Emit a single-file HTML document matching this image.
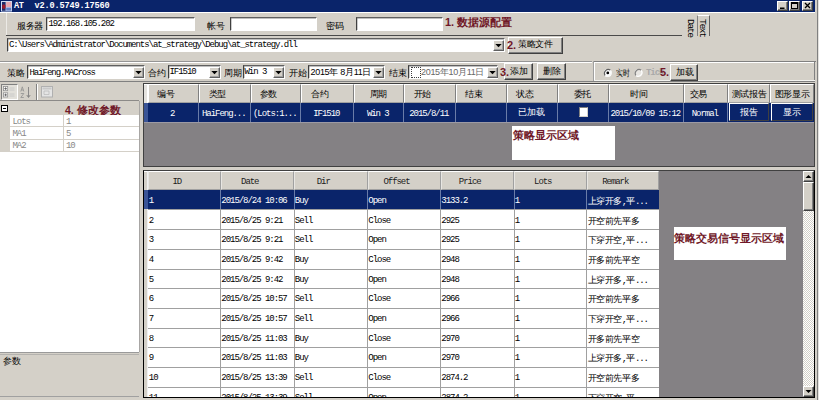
<!DOCTYPE html><html><head><meta charset="utf-8"><style>
html,body{margin:0;padding:0;width:819px;height:400px;overflow:hidden;background:#d4d0c8;position:relative}
div,svg{position:absolute;box-sizing:border-box}
svg{overflow:visible}
.t{white-space:nowrap;line-height:1}
.cn{font-family:"Liberation Sans",sans-serif;font-size:9px;letter-spacing:-0.4px;color:#000;font-weight:500}
.cm{font-weight:500}
.sn{font-family:"Liberation Sans",sans-serif;font-size:9px;color:#000}
.mn{font-family:"Liberation Mono",monospace;font-size:9px;letter-spacing:-1.04px;color:#000}
.rd{font-family:"Liberation Sans",sans-serif;font-size:11px;font-weight:bold;color:#701828}
.sk{border-top:1px solid #606060;border-left:1px solid #404040;border-bottom:1px solid #fff;border-right:1px solid #fff;box-shadow:inset 0.4px 0.4px 0 #808080}
.rs{background:#d4d0c8;border-top:1px solid #fff;border-left:1px solid #fff;border-bottom:1px solid #404040;border-right:1px solid #404040;box-shadow:inset -1px -1px 0 #808080}
</style></head><body>

<div style="left:0px;top:0px;width:815px;height:12px;background:#0a246a"></div>
<svg style="left:1px;top:1px" width="11" height="10.5"><rect x="0" y="0" width="11" height="10.5" fill="#d0daf0"/><rect x="1" y="1" width="3.6" height="8.8" fill="#1c2c6c"/><rect x="1.2" y="3.5" width="3.2" height="4.2" rx="1" fill="#a01828"/><rect x="5.2" y="1" width="5" height="5" fill="#e8a8b0"/><rect x="5.2" y="6.6" width="5" height="3" fill="#6080c8"/></svg>
<div class="t mn" style="left:14px;top:2.40px;color:#fff;font-weight:bold;font-size:8.6px;letter-spacing:-0.4px">AT</div>
<div class="t mn" style="left:34.5px;top:2.40px;color:#fff;font-weight:bold;font-size:8.6px;letter-spacing:-0.16px">v2.0.5749.17560</div>
<div class="rs" style="left:777px;top:1px;width:11px;height:10px;"></div>
<div class="rs" style="left:789px;top:1px;width:11px;height:10px;"></div>
<div class="rs" style="left:802px;top:1px;width:11px;height:10px;"></div>
<svg style="left:777px;top:1px" width="11" height="10"><rect x="3" y="6.5" width="4.5" height="1.5" fill="#000"/></svg>
<svg style="left:789px;top:1px" width="11" height="10"><rect x="2.5" y="1.5" width="6" height="6" fill="none" stroke="#000" stroke-width="1"/><rect x="2.5" y="1.5" width="6" height="1.5" fill="#000"/></svg>
<svg style="left:802px;top:1px" width="11" height="10"><path d="M3 2L8 7M8 2L3 7" stroke="#000" stroke-width="1.3"/></svg>
<div style="left:815px;top:0px;width:4px;height:400px;background:#d4d0c8"></div>
<div style="left:817.3px;top:0px;width:1px;height:400px;background:#808080"></div>
<div style="left:818.3px;top:0px;width:1px;height:400px;background:#e4e2de"></div>
<div style="left:0px;top:12px;width:815px;height:1px;background:#fff"></div>
<div class="t cn" style="left:17px;top:22.00px;">服务器</div>
<div class="sk" style="left:46px;top:17px;width:149px;height:14px;background:#fff"></div>
<div class="t mn" style="left:48.5px;top:20.30px;">192.168.105.202</div>
<div class="t cn" style="left:207px;top:21.50px;">帐号</div>
<div class="sk" style="left:230px;top:17px;width:87px;height:14px;background:#fff"></div>
<div class="t cn" style="left:326px;top:22.00px;">密码</div>
<div class="sk" style="left:356px;top:17px;width:87px;height:14px;background:#fff"></div>
<div class="t rd" style="left:445px;top:16.70px;">1. 数据源配置</div>
<div style="left:6px;top:34.8px;width:676px;height:1.4px;background:#4a4a4a"></div>
<div style="left:5.5px;top:13px;width:1px;height:22px;background:#eceae6"></div>
<div class="t mn" style="left:685.3px;top:19.00px;writing-mode:vertical-rl;font-size:9.6px;letter-spacing:-1.35px">Date</div>
<div style="left:697.3px;top:15px;width:13px;height:21px;border-left:1.3px solid #808080;border-right:1px solid #606060;border-top:1px solid #fff"></div>
<div class="t mn" style="left:697.3px;top:19.00px;writing-mode:vertical-rl;font-size:9.6px;letter-spacing:-1.35px">Text</div>
<div class="sk" style="left:7px;top:38px;width:498px;height:14px;background:#fff"></div>
<div class="t mn" style="left:9px;top:41.20px;">C:\Users\Administrator\Documents\at_strategy\Debug\at_strategy.dll</div>
<div class="rs" style="left:492.5px;top:39.5px;width:11px;height:11px;border-bottom-color:#606060;border-right-color:#606060;box-shadow:inset -1px -1px 0 #a0a0a0"></div>
<svg style="left:492.5px;top:39.5px" width="11" height="11"><path d="M2.30 3.90h6.4l-3.2 3.4z" fill="#000"/></svg>
<div class="rs" style="left:508px;top:37px;width:55px;height:17px;"></div>
<div class="t rd" style="left:507px;top:39.70px;">2.</div>
<div class="t cn" style="left:518px;top:40.00px;">策略文件</div>
<div style="left:0px;top:61px;width:592px;height:1px;background:#959595"></div>
<div style="left:0px;top:62px;width:592px;height:1px;background:#fff"></div>
<div class="t cn" style="left:7px;top:68.75px;">策略</div>
<div class="sk" style="left:27px;top:65px;width:118px;height:14px;background:#fff"></div>
<div class="t mn" style="left:29.5px;top:68.70px;">HaiFeng.MACross</div>
<div class="rs" style="left:133px;top:66.5px;width:11px;height:11px;border-bottom-color:#606060;border-right-color:#606060;box-shadow:inset -1px -1px 0 #a0a0a0"></div>
<svg style="left:133px;top:66.5px" width="11" height="11"><path d="M2.30 3.90h6.4l-3.2 3.4z" fill="#000"/></svg>
<div class="t cn" style="left:148px;top:68.75px;">合约</div>
<div class="sk" style="left:168px;top:65px;width:53px;height:14px;background:#fff"></div>
<div class="t mn" style="left:169.5px;top:67.70px;">IF1510</div>
<div class="rs" style="left:208.5px;top:66.5px;width:11px;height:11px;border-bottom-color:#606060;border-right-color:#606060;box-shadow:inset -1px -1px 0 #a0a0a0"></div>
<svg style="left:208.5px;top:66.5px" width="11" height="11"><path d="M2.30 3.90h6.4l-3.2 3.4z" fill="#000"/></svg>
<div class="t cn" style="left:224px;top:68.50px;">周期</div>
<div class="sk" style="left:243px;top:65px;width:42px;height:14px;background:#fff"></div>
<div class="t mn" style="left:244.5px;top:68.20px;">Win 3</div>
<div class="rs" style="left:273px;top:66.5px;width:11px;height:11px;border-bottom-color:#606060;border-right-color:#606060;box-shadow:inset -1px -1px 0 #a0a0a0"></div>
<svg style="left:273px;top:66.5px" width="11" height="11"><path d="M2.30 3.90h6.4l-3.2 3.4z" fill="#000"/></svg>
<div class="t cn" style="left:289px;top:68.50px;">开始</div>
<div class="sk" style="left:308px;top:65px;width:77px;height:14px;background:#fff"></div>
<div class="t cn" style="left:310.5px;top:67.50px;letter-spacing:-0.3px">2015年 8月11日</div>
<div class="rs" style="left:373px;top:66.5px;width:11px;height:11px;border-bottom-color:#606060;border-right-color:#606060;box-shadow:inset -1px -1px 0 #a0a0a0"></div>
<svg style="left:373px;top:66.5px" width="11" height="11"><path d="M2.30 3.90h6.4l-3.2 3.4z" fill="#000"/></svg>
<div class="t cn" style="left:389px;top:68.50px;">结束</div>
<div class="sk" style="left:408px;top:65px;width:90px;height:14px;background:#fff"></div>
<div style="left:410.5px;top:66.5px;width:10px;height:11px;border:1px dotted #404040;background:#fff"></div>
<div class="t cn" style="left:421px;top:67.50px;color:#686868;letter-spacing:-0.3px">2015年10月11日</div>
<div class="rs" style="left:486.5px;top:66.5px;width:11px;height:11px;border-bottom-color:#606060;border-right-color:#606060;box-shadow:inset -1px -1px 0 #a0a0a0"></div>
<svg style="left:486.5px;top:66.5px" width="11" height="11"><path d="M2.30 3.90h6.4l-3.2 3.4z" fill="#000"/></svg>
<div class="rs" style="left:504px;top:63px;width:29px;height:17px;"></div>
<div class="t rd" style="left:500px;top:66.70px;">3.</div>
<div class="t cn" style="left:510px;top:67.00px;">添加</div>
<div class="rs" style="left:537px;top:63px;width:29px;height:17px;"></div>
<div class="t cn" style="left:543px;top:67.00px;">删除</div>
<div style="left:592.5px;top:61px;width:1px;height:21px;background:#a0a0a0"></div>
<div style="left:593.5px;top:62px;width:1px;height:19px;background:#fff"></div>
<div style="left:593.5px;top:61px;width:222px;height:1px;background:#808080"></div>
<div style="left:594px;top:62px;width:221px;height:1px;background:#fff"></div>
<div style="left:814px;top:61px;width:1px;height:21px;background:#808080"></div>
<div style="left:593.5px;top:80.3px;width:221px;height:1px;background:#f4f4f0"></div>
<div style="left:0px;top:81.3px;width:815px;height:1px;background:#808080"></div>
<svg style="left:603px;top:68px" width="10" height="10"><circle cx="4.8" cy="4.9" r="3.9" fill="#fff"/><path d="M2.1 7.6A3.9 3.9 0 0 1 7.5 2.2" stroke="#606060" stroke-width="1.1" fill="none"/><path d="M7.5 2.2A3.9 3.9 0 0 1 2.1 7.6" stroke="#f8f8f8" stroke-width="1.1" fill="none"/><circle cx="4.8" cy="4.9" r="1.4" fill="#000"/></svg>
<div class="t cn" style="left:615.5px;top:69.20px;transform:scaleX(0.76);transform-origin:0 0">实时</div>
<svg style="left:634px;top:68px" width="10" height="10"><circle cx="4.6" cy="4.9" r="3.9" fill="#e8e6e2"/><path d="M1.9 7.6A3.9 3.9 0 0 1 7.3 2.2" stroke="#808080" stroke-width="1.1" fill="none"/><path d="M7.3 2.2A3.9 3.9 0 0 1 1.9 7.6" stroke="#fff" stroke-width="1.1" fill="none"/></svg>
<div class="t mn" style="left:646px;top:68.60px;color:#a8a8a8;font-weight:bold">Tick</div>
<div class="t rd" style="left:660px;top:66.70px;">5.</div>
<div class="rs" style="left:670px;top:64px;width:28px;height:17px;"></div>
<div class="t cn" style="left:676px;top:67.50px;">加载</div>
<div style="left:1px;top:84px;width:16.5px;height:15.5px;border:1px solid #808080;border-right-color:#fff;border-bottom-color:#fff;background:#e2e0da"></div>
<svg style="left:3px;top:86px" width="13" height="12"><rect x="0.5" y="0.5" width="4.2" height="4.2" fill="#fff" stroke="#909090" stroke-width="0.8"/><path d="M1.3 2.6h2.6M2.6 1.3v2.6" stroke="#505050" stroke-width="0.8"/><rect x="0.5" y="6.8" width="4.2" height="4.2" fill="#fff" stroke="#909090" stroke-width="0.8"/><path d="M1.3 8.9h2.6M2.6 7.6v2.6" stroke="#505050" stroke-width="0.8"/><path d="M6.5 2h5M6.5 4h5M6.5 8h5M6.5 10h5" stroke="#c4c4c4" stroke-width="0.8"/></svg>
<svg style="left:20px;top:85.5px" width="12" height="13"><path d="M0.8 5.5L2.3 0.8L3.8 5.5M1.3 4h2" stroke="#909090" stroke-width="0.8" fill="none"/><path d="M0.8 7.5h3L0.8 11.5h3" stroke="#909090" stroke-width="0.8" fill="none"/><path d="M8.5 1v10M6.8 9l1.7 2.5 1.7-2.5" stroke="#808080" stroke-width="0.9" fill="none"/></svg>
<div style="left:36.3px;top:84px;width:1px;height:16px;background:#808080"></div>
<div style="left:37.3px;top:84px;width:1px;height:16px;background:#fff"></div>
<svg style="left:41px;top:86px" width="12" height="11"><rect x="0.5" y="0.5" width="11" height="10.5" fill="#e4e4e4" stroke="#b0b0b0"/><rect x="1.5" y="1.5" width="9" height="2" fill="#c8c8c8"/><path d="M3 5h5v3.5H3z" fill="none" stroke="#b8b8b8" stroke-width="0.7"/></svg>
<div style="left:0px;top:100px;width:140px;height:1.2px;background:#8c8a88"></div>
<div style="left:0px;top:102.5px;width:139px;height:12.5px;background:#d4d0c8"></div>
<div style="left:1px;top:104.8px;width:7px;height:7px;border:1px solid #000;background:#fff"></div>
<div style="left:3px;top:107.7px;width:3.2px;height:1.3px;background:#000"></div>
<div class="t rd" style="left:65px;top:104.70px;font-size:10.5px">4. 修改参数</div>
<div style="left:10px;top:115.0px;width:129px;height:12.3px;background:#fff;border-bottom:1px solid #d4d0c8"></div>
<div class="t mn" style="left:12.5px;top:117.80px;color:#888">Lots</div>
<div class="t mn" style="left:66px;top:117.80px;color:#888">1</div>
<div style="left:10px;top:127.3px;width:129px;height:12.3px;background:#fff;border-bottom:1px solid #d4d0c8"></div>
<div class="t mn" style="left:12.5px;top:130.10px;color:#888">MA1</div>
<div class="t mn" style="left:66px;top:130.10px;color:#888">5</div>
<div style="left:10px;top:139.6px;width:129px;height:12.3px;background:#fff;border-bottom:1px solid #d4d0c8"></div>
<div class="t mn" style="left:12.5px;top:142.40px;color:#888">MA2</div>
<div class="t mn" style="left:66px;top:142.40px;color:#888">10</div>
<div style="left:63px;top:115px;width:1px;height:37px;background:#d4d0c8"></div>
<div style="left:0px;top:152px;width:139px;height:200px;background:#fff"></div>
<div style="left:0px;top:351.5px;width:140px;height:45.5px;border-top:1px solid #9a9a9a;border-bottom:1px solid #a0a0a0;border-right:1px solid #b0b0b0;background:#d4d0c8"></div>
<div style="left:0px;top:353.8px;width:139px;height:1px;background:#b4b2ae"></div>
<div class="t cn" style="left:3px;top:357.00px;">参数</div>
<div style="left:139px;top:83px;width:4px;height:317px;background:#d4d0c8"></div>
<div style="left:139px;top:101px;width:1.2px;height:251px;background:#a8a6a4"></div>
<div style="left:0px;top:397px;width:815px;height:3px;background:#d4d0c8"></div>
<div style="left:143px;top:83px;width:672px;height:84px;background:#848184;border-left:1px solid #404040;border-top:1px solid #404040;border-bottom:1px solid #404040;border-right:1px solid #404040"></div>
<div style="left:144px;top:84px;width:670px;height:18.5px;background:#d4d0c8"></div>
<div style="left:144px;top:84px;width:4px;height:18.8px;background:#e4e2de;border-right:1px solid #fff;border-top:1px solid #fff"></div>
<div style="left:144px;top:102.8px;width:4px;height:19px;background:#3a5496"></div>
<div style="left:148px;top:84px;width:51px;height:18.5px;border-top:1px solid #fff;border-left:1px solid #fff;border-right:1px solid #808080;border-bottom:1px solid #a0a0a0"></div>
<div class="t cn" style="left:148px;top:89.50px;width:36px;text-align:center;">编号</div>
<div style="left:199px;top:84px;width:52px;height:18.5px;border-top:1px solid #fff;border-left:1px solid #fff;border-right:1px solid #808080;border-bottom:1px solid #a0a0a0"></div>
<div class="t cn" style="left:199px;top:89.50px;width:37px;text-align:center;">类型</div>
<div style="left:251px;top:84px;width:50px;height:18.5px;border-top:1px solid #fff;border-left:1px solid #fff;border-right:1px solid #808080;border-bottom:1px solid #a0a0a0"></div>
<div class="t cn" style="left:251px;top:89.50px;width:35px;text-align:center;">参数</div>
<div style="left:301px;top:84px;width:53px;height:18.5px;border-top:1px solid #fff;border-left:1px solid #fff;border-right:1px solid #808080;border-bottom:1px solid #a0a0a0"></div>
<div class="t cn" style="left:301px;top:89.50px;width:38px;text-align:center;">合约</div>
<div style="left:354px;top:84px;width:50px;height:18.5px;border-top:1px solid #fff;border-left:1px solid #fff;border-right:1px solid #808080;border-bottom:1px solid #a0a0a0"></div>
<div class="t cn" style="left:354px;top:89.50px;width:49px;text-align:center;">周期</div>
<div style="left:404px;top:84px;width:52px;height:18.5px;border-top:1px solid #fff;border-left:1px solid #fff;border-right:1px solid #808080;border-bottom:1px solid #a0a0a0"></div>
<div class="t cn" style="left:404px;top:89.50px;width:37px;text-align:center;">开始</div>
<div style="left:456px;top:84px;width:51px;height:18.5px;border-top:1px solid #fff;border-left:1px solid #fff;border-right:1px solid #808080;border-bottom:1px solid #a0a0a0"></div>
<div class="t cn" style="left:456px;top:89.50px;width:36px;text-align:center;">结束</div>
<div style="left:507px;top:84px;width:51px;height:18.5px;border-top:1px solid #fff;border-left:1px solid #fff;border-right:1px solid #808080;border-bottom:1px solid #a0a0a0"></div>
<div class="t cn" style="left:507px;top:89.50px;width:36px;text-align:center;">状态</div>
<div style="left:558px;top:84px;width:51px;height:18.5px;border-top:1px solid #fff;border-left:1px solid #fff;border-right:1px solid #808080;border-bottom:1px solid #a0a0a0"></div>
<div class="t cn" style="left:558px;top:89.50px;width:48.5px;text-align:center;">委托</div>
<div style="left:609px;top:84px;width:75px;height:18.5px;border-top:1px solid #fff;border-left:1px solid #fff;border-right:1px solid #808080;border-bottom:1px solid #a0a0a0"></div>
<div class="t cn" style="left:609px;top:89.50px;width:60px;text-align:center;">时间</div>
<div style="left:684px;top:84px;width:44px;height:18.5px;border-top:1px solid #fff;border-left:1px solid #fff;border-right:1px solid #808080;border-bottom:1px solid #a0a0a0"></div>
<div class="t cn" style="left:684px;top:89.50px;width:29px;text-align:center;">交易</div>
<div style="left:728px;top:84px;width:42px;height:18.5px;border-top:1px solid #fff;border-left:1px solid #fff;border-right:1px solid #808080;border-bottom:1px solid #a0a0a0"></div>
<div class="t cn" style="left:728px;top:89.50px;width:42px;text-align:center;">测试报告</div>
<div style="left:770px;top:84px;width:44px;height:18.5px;border-top:1px solid #fff;border-left:1px solid #fff;border-right:1px solid #808080;border-bottom:1px solid #a0a0a0"></div>
<div class="t cn" style="left:770px;top:89.50px;width:44px;text-align:center;">图形显示</div>
<div style="left:148px;top:102.8px;width:666px;height:19px;background:#0a246a"></div>
<div style="left:144px;top:121.8px;width:670px;height:1.2px;background:#9c9aa4"></div>
<div style="left:198px;top:102.8px;width:1px;height:19px;background:#6a7ca8"></div>
<div class="t mn" style="left:146.8px;top:109.80px;width:51.0px;text-align:center;color:#fff">2</div>
<div style="left:250px;top:102.8px;width:1px;height:19px;background:#6a7ca8"></div>
<div class="t mn" style="left:197.8px;top:109.80px;width:52.0px;text-align:center;color:#fff">HaiFeng...</div>
<div style="left:300px;top:102.8px;width:1px;height:19px;background:#6a7ca8"></div>
<div class="t mn" style="left:249.8px;top:109.80px;width:50.0px;text-align:center;color:#fff">(Lots:1...</div>
<div style="left:353px;top:102.8px;width:1px;height:19px;background:#6a7ca8"></div>
<div class="t mn" style="left:299.8px;top:109.80px;width:53.0px;text-align:center;color:#fff">IF1510</div>
<div style="left:403px;top:102.8px;width:1px;height:19px;background:#6a7ca8"></div>
<div class="t mn" style="left:352.8px;top:109.80px;width:50.0px;text-align:center;color:#fff">Win 3</div>
<div style="left:455px;top:102.8px;width:1px;height:19px;background:#6a7ca8"></div>
<div class="t mn" style="left:402.8px;top:109.80px;width:52.0px;text-align:center;color:#fff">2015/8/11</div>
<div style="left:506px;top:102.8px;width:1px;height:19px;background:#6a7ca8"></div>
<div class="t mn" style="left:454.8px;top:109.80px;width:51.0px;text-align:center;color:#fff"></div>
<div style="left:557px;top:102.8px;width:1px;height:19px;background:#6a7ca8"></div>
<div class="t cn" style="left:505.8px;top:108.30px;width:50.99999999999994px;text-align:center;color:#fff">已加载</div>
<div style="left:608px;top:102.8px;width:1px;height:19px;background:#6a7ca8"></div>
<div class="t mn" style="left:556.8px;top:109.80px;width:51.0px;text-align:center;color:#fff"></div>
<div style="left:683px;top:102.8px;width:1px;height:19px;background:#6a7ca8"></div>
<div class="t mn" style="left:607.8px;top:109.80px;width:75.0px;text-align:center;color:#fff">2015/10/09 15:12</div>
<div style="left:727px;top:102.8px;width:1px;height:19px;background:#6a7ca8"></div>
<div class="t mn" style="left:682.8px;top:109.80px;width:44.0px;text-align:center;color:#fff">Normal</div>
<div style="left:578.5px;top:107px;width:9.5px;height:10px;background:#fff;border:1px solid #808080;border-right-color:#d4d0c8;border-bottom-color:#d4d0c8"></div>
<div style="left:728.5px;top:103px;width:40.5px;height:17.5px;background:#0a246a;border-top:1px solid #fff;border-left:1px solid #fff;border-right:1px solid #404040;border-bottom:1px solid #404040"></div>
<div class="t cn" style="left:728px;top:108.00px;width:42px;text-align:center;color:#fff">报告</div>
<div style="left:770.5px;top:103px;width:42.5px;height:17.5px;background:#0a246a;border-top:1px solid #fff;border-left:1px solid #fff;border-right:1px solid #404040;border-bottom:1px solid #404040"></div>
<div class="t cn" style="left:770px;top:108.00px;width:44px;text-align:center;color:#fff">显示</div>
<div style="left:512px;top:125.5px;width:102.5px;height:34.5px;background:#fff"></div>
<div class="t rd" style="left:513px;top:129.70px;">策略显示区域</div>
<div style="left:143px;top:170px;width:672px;height:228px;background:#848184;border-left:1px solid #000;border-top:1px solid #404040;border-bottom:1px solid #000;border-right:1px solid #000"></div>
<div style="left:144px;top:171px;width:4px;height:226px;background:#d4d0c8;border-right:1px solid #f0f0f0;border-top:1px solid #fff"></div>
<div style="left:144px;top:190px;width:4px;height:19px;background:#3a5496"></div>
<div style="left:148px;top:171px;width:72.5px;height:19px;background:#d4d0c8;border-top:1px solid #fff;border-left:1px solid #e8e6e2;border-right:1px solid #a0a0a0;border-bottom:1px solid #a0a0a0"></div>
<div class="t mn" style="left:148px;top:178.40px;width:57.5px;text-align:center;color:#202020">ID</div>
<div style="left:220.5px;top:171px;width:73.5px;height:19px;background:#d4d0c8;border-top:1px solid #fff;border-left:1px solid #e8e6e2;border-right:1px solid #a0a0a0;border-bottom:1px solid #a0a0a0"></div>
<div class="t mn" style="left:220.5px;top:178.40px;width:58.5px;text-align:center;color:#202020">Date</div>
<div style="left:294px;top:171px;width:73.5px;height:19px;background:#d4d0c8;border-top:1px solid #fff;border-left:1px solid #e8e6e2;border-right:1px solid #a0a0a0;border-bottom:1px solid #a0a0a0"></div>
<div class="t mn" style="left:294px;top:178.40px;width:58.5px;text-align:center;color:#202020">Dir</div>
<div style="left:367.5px;top:171px;width:73.0px;height:19px;background:#d4d0c8;border-top:1px solid #fff;border-left:1px solid #e8e6e2;border-right:1px solid #a0a0a0;border-bottom:1px solid #a0a0a0"></div>
<div class="t mn" style="left:367.5px;top:178.40px;width:58.0px;text-align:center;color:#202020">Offset</div>
<div style="left:440.5px;top:171px;width:73.5px;height:19px;background:#d4d0c8;border-top:1px solid #fff;border-left:1px solid #e8e6e2;border-right:1px solid #a0a0a0;border-bottom:1px solid #a0a0a0"></div>
<div class="t mn" style="left:440.5px;top:178.40px;width:58.5px;text-align:center;color:#202020">Price</div>
<div style="left:514px;top:171px;width:72.5px;height:19px;background:#d4d0c8;border-top:1px solid #fff;border-left:1px solid #e8e6e2;border-right:1px solid #a0a0a0;border-bottom:1px solid #a0a0a0"></div>
<div class="t mn" style="left:514px;top:178.40px;width:57.5px;text-align:center;color:#202020">Lots</div>
<div style="left:586.5px;top:171px;width:72.5px;height:19px;background:#d4d0c8;border-top:1px solid #fff;border-left:1px solid #e8e6e2;border-right:1px solid #a0a0a0;border-bottom:1px solid #a0a0a0"></div>
<div class="t mn" style="left:586.5px;top:178.40px;width:57.5px;text-align:center;color:#202020">Remark</div>
<div style="left:148px;top:190px;width:511px;height:207px;overflow:hidden">
<div style="left:0;top:0.00px;width:511px;height:19.00px;background:#0a246a"></div>
<div style="left:72.0px;top:0.00px;width:1px;height:19.00px;background:#6a7ca8"></div>
<div class="t mn" style="left:0.8px;top:6.60px;color:#fff">1</div>
<div style="left:145.5px;top:0.00px;width:1px;height:19.00px;background:#6a7ca8"></div>
<div class="t mn" style="left:73.3px;top:6.60px;color:#fff">2015/8/24 10:06</div>
<div style="left:219.0px;top:0.00px;width:1px;height:19.00px;background:#6a7ca8"></div>
<div class="t mn" style="left:146.8px;top:6.60px;color:#fff">Buy</div>
<div style="left:292.0px;top:0.00px;width:1px;height:19.00px;background:#6a7ca8"></div>
<div class="t mn" style="left:220.3px;top:6.60px;color:#fff">Open</div>
<div style="left:365.5px;top:0.00px;width:1px;height:19.00px;background:#6a7ca8"></div>
<div class="t mn" style="left:293.3px;top:6.60px;color:#fff">3133.2</div>
<div style="left:438.0px;top:0.00px;width:1px;height:19.00px;background:#6a7ca8"></div>
<div class="t mn" style="left:366.8px;top:6.60px;color:#fff">1</div>
<div class="t cn cm" style="left:439.5px;top:6.60px;color:#fff">上穿开多<span class="mn" style="color:inherit">,</span>平<span class="mn" style="color:inherit">...</span></div>
<div style="left:0;top:19.90px;width:511px;height:19.70px;background:#fff"></div>
<div style="left:0;top:19.40px;width:511px;height:1px;background:#a0a0a0"></div>
<div style="left:72.0px;top:19.90px;width:1px;height:19.70px;background:#a0a0a0"></div>
<div class="t mn" style="left:0.8px;top:26.50px;color:#000">2</div>
<div style="left:145.5px;top:19.90px;width:1px;height:19.70px;background:#a0a0a0"></div>
<div class="t mn" style="left:73.3px;top:26.50px;color:#000">2015/8/25 9:21</div>
<div style="left:219.0px;top:19.90px;width:1px;height:19.70px;background:#a0a0a0"></div>
<div class="t mn" style="left:146.8px;top:26.50px;color:#000">Sell</div>
<div style="left:292.0px;top:19.90px;width:1px;height:19.70px;background:#a0a0a0"></div>
<div class="t mn" style="left:220.3px;top:26.50px;color:#000">Close</div>
<div style="left:365.5px;top:19.90px;width:1px;height:19.70px;background:#a0a0a0"></div>
<div class="t mn" style="left:293.3px;top:26.50px;color:#000">2925</div>
<div style="left:438.0px;top:19.90px;width:1px;height:19.70px;background:#a0a0a0"></div>
<div class="t mn" style="left:366.8px;top:26.50px;color:#000">1</div>
<div class="t cn cm" style="left:439.5px;top:26.50px;color:#000">开空前先平多</div>
<div style="left:0;top:39.60px;width:511px;height:19.70px;background:#fff"></div>
<div style="left:0;top:39.10px;width:511px;height:1px;background:#a0a0a0"></div>
<div style="left:72.0px;top:39.60px;width:1px;height:19.70px;background:#a0a0a0"></div>
<div class="t mn" style="left:0.8px;top:46.20px;color:#000">3</div>
<div style="left:145.5px;top:39.60px;width:1px;height:19.70px;background:#a0a0a0"></div>
<div class="t mn" style="left:73.3px;top:46.20px;color:#000">2015/8/25 9:21</div>
<div style="left:219.0px;top:39.60px;width:1px;height:19.70px;background:#a0a0a0"></div>
<div class="t mn" style="left:146.8px;top:46.20px;color:#000">Sell</div>
<div style="left:292.0px;top:39.60px;width:1px;height:19.70px;background:#a0a0a0"></div>
<div class="t mn" style="left:220.3px;top:46.20px;color:#000">Open</div>
<div style="left:365.5px;top:39.60px;width:1px;height:19.70px;background:#a0a0a0"></div>
<div class="t mn" style="left:293.3px;top:46.20px;color:#000">2925</div>
<div style="left:438.0px;top:39.60px;width:1px;height:19.70px;background:#a0a0a0"></div>
<div class="t mn" style="left:366.8px;top:46.20px;color:#000">1</div>
<div class="t cn cm" style="left:439.5px;top:46.20px;color:#000">下穿开空<span class="mn" style="color:inherit">,</span>平<span class="mn" style="color:inherit">...</span></div>
<div style="left:0;top:59.30px;width:511px;height:19.70px;background:#fff"></div>
<div style="left:0;top:58.80px;width:511px;height:1px;background:#a0a0a0"></div>
<div style="left:72.0px;top:59.30px;width:1px;height:19.70px;background:#a0a0a0"></div>
<div class="t mn" style="left:0.8px;top:65.90px;color:#000">4</div>
<div style="left:145.5px;top:59.30px;width:1px;height:19.70px;background:#a0a0a0"></div>
<div class="t mn" style="left:73.3px;top:65.90px;color:#000">2015/8/25 9:42</div>
<div style="left:219.0px;top:59.30px;width:1px;height:19.70px;background:#a0a0a0"></div>
<div class="t mn" style="left:146.8px;top:65.90px;color:#000">Buy</div>
<div style="left:292.0px;top:59.30px;width:1px;height:19.70px;background:#a0a0a0"></div>
<div class="t mn" style="left:220.3px;top:65.90px;color:#000">Close</div>
<div style="left:365.5px;top:59.30px;width:1px;height:19.70px;background:#a0a0a0"></div>
<div class="t mn" style="left:293.3px;top:65.90px;color:#000">2948</div>
<div style="left:438.0px;top:59.30px;width:1px;height:19.70px;background:#a0a0a0"></div>
<div class="t mn" style="left:366.8px;top:65.90px;color:#000">1</div>
<div class="t cn cm" style="left:439.5px;top:65.90px;color:#000">开多前先平空</div>
<div style="left:0;top:79.00px;width:511px;height:19.70px;background:#fff"></div>
<div style="left:0;top:78.50px;width:511px;height:1px;background:#a0a0a0"></div>
<div style="left:72.0px;top:79.00px;width:1px;height:19.70px;background:#a0a0a0"></div>
<div class="t mn" style="left:0.8px;top:85.60px;color:#000">5</div>
<div style="left:145.5px;top:79.00px;width:1px;height:19.70px;background:#a0a0a0"></div>
<div class="t mn" style="left:73.3px;top:85.60px;color:#000">2015/8/25 9:42</div>
<div style="left:219.0px;top:79.00px;width:1px;height:19.70px;background:#a0a0a0"></div>
<div class="t mn" style="left:146.8px;top:85.60px;color:#000">Buy</div>
<div style="left:292.0px;top:79.00px;width:1px;height:19.70px;background:#a0a0a0"></div>
<div class="t mn" style="left:220.3px;top:85.60px;color:#000">Open</div>
<div style="left:365.5px;top:79.00px;width:1px;height:19.70px;background:#a0a0a0"></div>
<div class="t mn" style="left:293.3px;top:85.60px;color:#000">2948</div>
<div style="left:438.0px;top:79.00px;width:1px;height:19.70px;background:#a0a0a0"></div>
<div class="t mn" style="left:366.8px;top:85.60px;color:#000">1</div>
<div class="t cn cm" style="left:439.5px;top:85.60px;color:#000">上穿开多<span class="mn" style="color:inherit">,</span>平<span class="mn" style="color:inherit">...</span></div>
<div style="left:0;top:98.70px;width:511px;height:19.70px;background:#fff"></div>
<div style="left:0;top:98.20px;width:511px;height:1px;background:#a0a0a0"></div>
<div style="left:72.0px;top:98.70px;width:1px;height:19.70px;background:#a0a0a0"></div>
<div class="t mn" style="left:0.8px;top:105.30px;color:#000">6</div>
<div style="left:145.5px;top:98.70px;width:1px;height:19.70px;background:#a0a0a0"></div>
<div class="t mn" style="left:73.3px;top:105.30px;color:#000">2015/8/25 10:57</div>
<div style="left:219.0px;top:98.70px;width:1px;height:19.70px;background:#a0a0a0"></div>
<div class="t mn" style="left:146.8px;top:105.30px;color:#000">Sell</div>
<div style="left:292.0px;top:98.70px;width:1px;height:19.70px;background:#a0a0a0"></div>
<div class="t mn" style="left:220.3px;top:105.30px;color:#000">Close</div>
<div style="left:365.5px;top:98.70px;width:1px;height:19.70px;background:#a0a0a0"></div>
<div class="t mn" style="left:293.3px;top:105.30px;color:#000">2966</div>
<div style="left:438.0px;top:98.70px;width:1px;height:19.70px;background:#a0a0a0"></div>
<div class="t mn" style="left:366.8px;top:105.30px;color:#000">1</div>
<div class="t cn cm" style="left:439.5px;top:105.30px;color:#000">开空前先平多</div>
<div style="left:0;top:118.40px;width:511px;height:19.70px;background:#fff"></div>
<div style="left:0;top:117.90px;width:511px;height:1px;background:#a0a0a0"></div>
<div style="left:72.0px;top:118.40px;width:1px;height:19.70px;background:#a0a0a0"></div>
<div class="t mn" style="left:0.8px;top:125.00px;color:#000">7</div>
<div style="left:145.5px;top:118.40px;width:1px;height:19.70px;background:#a0a0a0"></div>
<div class="t mn" style="left:73.3px;top:125.00px;color:#000">2015/8/25 10:57</div>
<div style="left:219.0px;top:118.40px;width:1px;height:19.70px;background:#a0a0a0"></div>
<div class="t mn" style="left:146.8px;top:125.00px;color:#000">Sell</div>
<div style="left:292.0px;top:118.40px;width:1px;height:19.70px;background:#a0a0a0"></div>
<div class="t mn" style="left:220.3px;top:125.00px;color:#000">Open</div>
<div style="left:365.5px;top:118.40px;width:1px;height:19.70px;background:#a0a0a0"></div>
<div class="t mn" style="left:293.3px;top:125.00px;color:#000">2966</div>
<div style="left:438.0px;top:118.40px;width:1px;height:19.70px;background:#a0a0a0"></div>
<div class="t mn" style="left:366.8px;top:125.00px;color:#000">1</div>
<div class="t cn cm" style="left:439.5px;top:125.00px;color:#000">下穿开空<span class="mn" style="color:inherit">,</span>平<span class="mn" style="color:inherit">...</span></div>
<div style="left:0;top:138.10px;width:511px;height:19.70px;background:#fff"></div>
<div style="left:0;top:137.60px;width:511px;height:1px;background:#a0a0a0"></div>
<div style="left:72.0px;top:138.10px;width:1px;height:19.70px;background:#a0a0a0"></div>
<div class="t mn" style="left:0.8px;top:144.70px;color:#000">8</div>
<div style="left:145.5px;top:138.10px;width:1px;height:19.70px;background:#a0a0a0"></div>
<div class="t mn" style="left:73.3px;top:144.70px;color:#000">2015/8/25 11:03</div>
<div style="left:219.0px;top:138.10px;width:1px;height:19.70px;background:#a0a0a0"></div>
<div class="t mn" style="left:146.8px;top:144.70px;color:#000">Buy</div>
<div style="left:292.0px;top:138.10px;width:1px;height:19.70px;background:#a0a0a0"></div>
<div class="t mn" style="left:220.3px;top:144.70px;color:#000">Close</div>
<div style="left:365.5px;top:138.10px;width:1px;height:19.70px;background:#a0a0a0"></div>
<div class="t mn" style="left:293.3px;top:144.70px;color:#000">2970</div>
<div style="left:438.0px;top:138.10px;width:1px;height:19.70px;background:#a0a0a0"></div>
<div class="t mn" style="left:366.8px;top:144.70px;color:#000">1</div>
<div class="t cn cm" style="left:439.5px;top:144.70px;color:#000">开多前先平空</div>
<div style="left:0;top:157.80px;width:511px;height:19.70px;background:#fff"></div>
<div style="left:0;top:157.30px;width:511px;height:1px;background:#a0a0a0"></div>
<div style="left:72.0px;top:157.80px;width:1px;height:19.70px;background:#a0a0a0"></div>
<div class="t mn" style="left:0.8px;top:164.40px;color:#000">9</div>
<div style="left:145.5px;top:157.80px;width:1px;height:19.70px;background:#a0a0a0"></div>
<div class="t mn" style="left:73.3px;top:164.40px;color:#000">2015/8/25 11:03</div>
<div style="left:219.0px;top:157.80px;width:1px;height:19.70px;background:#a0a0a0"></div>
<div class="t mn" style="left:146.8px;top:164.40px;color:#000">Buy</div>
<div style="left:292.0px;top:157.80px;width:1px;height:19.70px;background:#a0a0a0"></div>
<div class="t mn" style="left:220.3px;top:164.40px;color:#000">Open</div>
<div style="left:365.5px;top:157.80px;width:1px;height:19.70px;background:#a0a0a0"></div>
<div class="t mn" style="left:293.3px;top:164.40px;color:#000">2970</div>
<div style="left:438.0px;top:157.80px;width:1px;height:19.70px;background:#a0a0a0"></div>
<div class="t mn" style="left:366.8px;top:164.40px;color:#000">1</div>
<div class="t cn cm" style="left:439.5px;top:164.40px;color:#000">上穿开多<span class="mn" style="color:inherit">,</span>平<span class="mn" style="color:inherit">...</span></div>
<div style="left:0;top:177.50px;width:511px;height:19.70px;background:#fff"></div>
<div style="left:0;top:177.00px;width:511px;height:1px;background:#a0a0a0"></div>
<div style="left:72.0px;top:177.50px;width:1px;height:19.70px;background:#a0a0a0"></div>
<div class="t mn" style="left:0.8px;top:184.10px;color:#000">10</div>
<div style="left:145.5px;top:177.50px;width:1px;height:19.70px;background:#a0a0a0"></div>
<div class="t mn" style="left:73.3px;top:184.10px;color:#000">2015/8/25 13:39</div>
<div style="left:219.0px;top:177.50px;width:1px;height:19.70px;background:#a0a0a0"></div>
<div class="t mn" style="left:146.8px;top:184.10px;color:#000">Sell</div>
<div style="left:292.0px;top:177.50px;width:1px;height:19.70px;background:#a0a0a0"></div>
<div class="t mn" style="left:220.3px;top:184.10px;color:#000">Close</div>
<div style="left:365.5px;top:177.50px;width:1px;height:19.70px;background:#a0a0a0"></div>
<div class="t mn" style="left:293.3px;top:184.10px;color:#000">2874.2</div>
<div style="left:438.0px;top:177.50px;width:1px;height:19.70px;background:#a0a0a0"></div>
<div class="t mn" style="left:366.8px;top:184.10px;color:#000">1</div>
<div class="t cn cm" style="left:439.5px;top:184.10px;color:#000">开空前先平多</div>
<div style="left:0;top:197.20px;width:511px;height:19.70px;background:#fff"></div>
<div style="left:0;top:196.70px;width:511px;height:1px;background:#a0a0a0"></div>
<div style="left:72.0px;top:197.20px;width:1px;height:19.70px;background:#a0a0a0"></div>
<div class="t mn" style="left:0.8px;top:203.80px;color:#000">11</div>
<div style="left:145.5px;top:197.20px;width:1px;height:19.70px;background:#a0a0a0"></div>
<div class="t mn" style="left:73.3px;top:203.80px;color:#000">2015/8/25 13:39</div>
<div style="left:219.0px;top:197.20px;width:1px;height:19.70px;background:#a0a0a0"></div>
<div class="t mn" style="left:146.8px;top:203.80px;color:#000">Sell</div>
<div style="left:292.0px;top:197.20px;width:1px;height:19.70px;background:#a0a0a0"></div>
<div class="t mn" style="left:220.3px;top:203.80px;color:#000">Open</div>
<div style="left:365.5px;top:197.20px;width:1px;height:19.70px;background:#a0a0a0"></div>
<div class="t mn" style="left:293.3px;top:203.80px;color:#000">2874.2</div>
<div style="left:438.0px;top:197.20px;width:1px;height:19.70px;background:#a0a0a0"></div>
<div class="t mn" style="left:366.8px;top:203.80px;color:#000">1</div>
<div class="t cn cm" style="left:439.5px;top:203.80px;color:#000">下穿开空<span class="mn" style="color:inherit">,</span>平<span class="mn" style="color:inherit">...</span></div>
</div>
<div style="left:803px;top:171px;width:11px;height:226px;background:repeating-conic-gradient(#fff 0 25%, #d4d0c8 0 50%) 0 0/2px 2px"></div>
<div class="rs" style="left:803px;top:171px;width:11px;height:11px;"></div>
<svg style="left:803px;top:171px" width="11" height="11"><path d="M2.5 7h6l-3-3z" fill="#000"/></svg>
<div class="rs" style="left:803px;top:181.5px;width:11px;height:29px;"></div>
<div class="rs" style="left:803px;top:386px;width:11px;height:11px;"></div>
<svg style="left:803px;top:386px" width="11" height="11"><path d="M2.5 4h6l-3 3z" fill="#000"/></svg>
<div style="left:673.5px;top:227px;width:112.5px;height:32.5px;background:#fff"></div>
<div class="t rd" style="left:674px;top:233.00px;font-size:10.8px">策略交易信号显示区域</div>
</body></html>
